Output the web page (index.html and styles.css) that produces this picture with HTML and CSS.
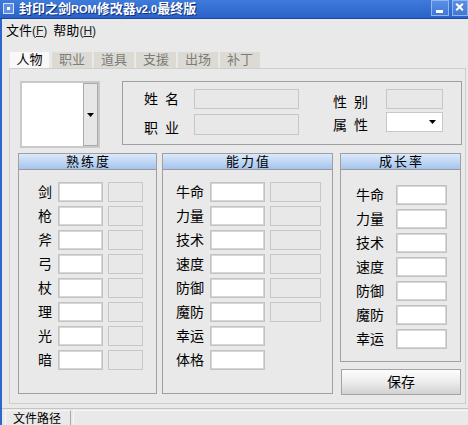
FILE: index.html
```html
<!DOCTYPE html>
<html>
<head>
<meta charset="utf-8">
<link rel="stylesheet" href="styles.css">
</head>
<body>
<div class="window">
  <div class="titlebar">
    <span class="app-icon"><span class="app-dot"></span></span>
    <span class="title">封印之剑<span class="lat">ROM</span>修改器<span class="lat">v2.0</span>最终版</span>
    <span class="spacer"></span>
    <span class="tbtn tmin"><svg width="16" height="14" viewBox="0 0 16 14"><rect x="4" y="9" width="7" height="3" fill="#fff"/></svg></span>
    <span class="tbtn tclose"><svg width="15" height="14" viewBox="0 0 15 14"><path d="M3.5 2.5l7 7M10.5 2.5l-7 7" stroke="#fff" stroke-width="2.2" fill="none"/></svg></span>
  </div>
  <div class="frame">
    <div class="menubar">
      <span class="menu">文件<span class="acc">(<u>F</u>)</span></span>
      <span class="menu">帮助<span class="acc">(<u>H</u>)</span></span>
    </div>
    <div class="client">
      <div class="tabs">
        <span class="tab active">人物</span>
        <span class="tab">职业</span>
        <span class="tab">道具</span>
        <span class="tab">支援</span>
        <span class="tab">出场</span>
        <span class="tab">补丁</span>
      </div>
      <div class="panel">
        <div class="toprow">
          <div class="listcombo">
            <div class="list"></div>
            <div class="dropbtn"><svg width="7" height="4" viewBox="0 0 7 4"><path d="M0 0h7L3.5 4z" fill="#000"/></svg></div>
          </div>
          <div class="infobox">
            <span class="lab la1">姓 名</span>
            <span class="inp dis"></span>
            <span></span>
            <span class="lab lb1">性 别</span>
            <span class="inp dis"></span>
            <span class="lab la2">职 业</span>
            <span class="inp dis"></span>
            <span></span>
            <span class="lab lb2">属 性</span>
            <span class="combo"><svg width="7" height="4" viewBox="0 0 7 4"><path d="M0 0h7L3.5 4z" fill="#000"/></svg></span>
          </div>
        </div>
        <div class="groups">
          <div class="group g1">
            <div class="ghead">熟练度</div>
            <div class="rows">
              <div class="row"><span class="rl">剑</span><span class="inp w1"></span><span class="inp dis w2"></span></div>
              <div class="row"><span class="rl">枪</span><span class="inp w1"></span><span class="inp dis w2"></span></div>
              <div class="row"><span class="rl">斧</span><span class="inp w1"></span><span class="inp dis w2"></span></div>
              <div class="row"><span class="rl">弓</span><span class="inp w1"></span><span class="inp dis w2"></span></div>
              <div class="row"><span class="rl">杖</span><span class="inp w1"></span><span class="inp dis w2"></span></div>
              <div class="row"><span class="rl">理</span><span class="inp w1"></span><span class="inp dis w2"></span></div>
              <div class="row"><span class="rl">光</span><span class="inp w1"></span><span class="inp dis w2"></span></div>
              <div class="row"><span class="rl">暗</span><span class="inp w1"></span><span class="inp dis w2"></span></div>
            </div>
          </div>
          <div class="group g2">
            <div class="ghead">能力值</div>
            <div class="rows">
              <div class="row"><span class="rl">牛命</span><span class="inp w1"></span><span class="inp dis w2"></span></div>
              <div class="row"><span class="rl">力量</span><span class="inp w1"></span><span class="inp dis w2"></span></div>
              <div class="row"><span class="rl">技术</span><span class="inp w1"></span><span class="inp dis w2"></span></div>
              <div class="row"><span class="rl">速度</span><span class="inp w1"></span><span class="inp dis w2"></span></div>
              <div class="row"><span class="rl">防御</span><span class="inp w1"></span><span class="inp dis w2"></span></div>
              <div class="row"><span class="rl">魔防</span><span class="inp w1"></span><span class="inp dis w2"></span></div>
              <div class="row"><span class="rl">幸运</span><span class="inp w1"></span></div>
              <div class="row"><span class="rl">体格</span><span class="inp w1"></span></div>
            </div>
          </div>
          <div class="rightcol">
            <div class="group g3">
              <div class="ghead">成长率</div>
              <div class="rows">
                <div class="row"><span class="rl">牛命</span><span class="inp w1"></span></div>
                <div class="row"><span class="rl">力量</span><span class="inp w1"></span></div>
                <div class="row"><span class="rl">技术</span><span class="inp w1"></span></div>
                <div class="row"><span class="rl">速度</span><span class="inp w1"></span></div>
                <div class="row"><span class="rl">防御</span><span class="inp w1"></span></div>
                <div class="row"><span class="rl">魔防</span><span class="inp w1"></span></div>
                <div class="row"><span class="rl">幸运</span><span class="inp w1"></span></div>
              </div>
            </div>
            <div class="save">保存</div>
          </div>
        </div>
      </div>
    </div>
    <div class="statusbar">
      <div class="spanel first">文件路径</div>
      <div class="spanel rest"></div>
    </div>
  </div>
</div>
</body>
</html>
```
FILE: styles.css
```css
* { box-sizing: border-box; }
html, body { margin: 0; padding: 0; }
body {
  width: 468px;
  height: 425px;
  overflow: hidden;
  background: #e9e9e9;
  font-family: "Liberation Sans", "Noto Sans CJK SC", sans-serif;
  font-size: 13px;
  color: #000;
}
.window {
  width: 468px;
  height: 425px;
  display: flex;
  flex-direction: column;
}
.titlebar {
  height: 19px;
  flex: none;
  display: flex;
  align-items: flex-start;
  background: linear-gradient(#3f7bdb, #2b62c7);
  border-bottom: 1px solid #1b469e;
}
.app-icon {
  width: 11px;
  height: 11px;
  margin: 3px 0 0 3px;
  border: 1px solid #d4e3fb;
  background: #5f90e0;
  display: flex;
  align-items: center;
  justify-content: center;
}
.app-dot { width: 3px; height: 3px; background: #fff; }
.title {
  margin-left: 5px;
  font-weight: bold;
  font-size: 13px;
  line-height: 18px;
  color: #fff;
  text-shadow: 1px 1px 0 #10307a;
  white-space: nowrap;
}
.lat { font-size: 11px; }
.spacer { flex: 1; }
.tbtn {
  height: 16px;
  border: 1px solid #94b6ee;
  background: linear-gradient(#5a8fe4, #4178d6);
  display: flex;
  align-items: center;
  justify-content: center;
}
.tmin { width: 18px; margin-right: 3px; }
.tclose { width: 16px; }
.frame {
  flex: 1;
  display: flex;
  flex-direction: column;
  border-left: 2px solid #2e66cc;
}
.menubar {
  height: 21px;
  flex: none;
  display: flex;
  align-items: center;
  gap: 6px;
  padding-left: 4px;
  font-size: 13px;
}
.acc { font-size: 12px; color: #222; }
.client {
  flex: none;
  padding: 12px 0 0 7px;
}
.tabs {
  display: flex;
  gap: 2px;
  height: 16px;
  margin-left: 1px;
}
.tab {
  width: 40px;
  height: 16px;
  line-height: 16px;
  text-align: center;
  font-size: 13px;
  background: #dcdad3;
  color: #7c7c7c;
}
.tab.active { background: #f8f8f8; color: #000; width: 39px; margin-right: 1px; }
.panel {
  width: 457px;
  height: 336px;
  border: 1px solid #cfcfcf;
  padding-top: 12px;
}
.toprow {
  display: flex;
  align-items: flex-start;
  margin-left: 10px;
  height: 67px;
}
.listcombo {
  width: 80px;
  height: 67px;
  border: 2px solid #c9c9c9;
  background: #fff;
  display: flex;
}
.list { flex: 1; }
.dropbtn {
  width: 15px;
  border: 1px solid #a9a9a9;
  background: #e7e7e7;
  display: flex;
  align-items: center;
  justify-content: center;
}
.infobox {
  margin-left: 22px;
  width: 340px;
  height: 64px;
  border: 1px solid #a0a0a0;
  display: grid;
  grid-template-columns: 50px 105px 34px 53px 57px;
  grid-template-rows: 20px 21px;
  row-gap: 5px;
  padding: 7px 0 0 21px;
}
.lab {
  font-size: 14px;
  line-height: 14px;
  word-spacing: 3px;
  white-space: nowrap;
}
.la1 { align-self: center; }
.la2 { align-self: end; }
.lb1 { align-self: end; }
.lb2 { align-self: center; }
.inp {
  display: block;
  height: 20px;
  background: #fff;
  border: 1px solid #c2c2c2;
  box-shadow: inset 0 0 0 1px #d6d6d6;
}
.inp.dis {
  background: #e8e8e8;
  border: 1px solid #c7c7c7;
  box-shadow: none;
}
.infobox .inp { height: auto; }
.combo {
  align-self: start;
  margin-top: -2px;
  height: 20px;
  background: #fff;
  border: 1px solid #c7c7c7;
  display: flex;
  align-items: center;
  justify-content: flex-end;
  padding-right: 6px;
}
.groups {
  display: flex;
  align-items: flex-start;
  margin: 5px 0 0 8px;
}
.group {
  border: 1px solid #a0a0a0;
}
.g1 { width: 139px; height: 241px; }
.g2 { width: 171px; height: 241px; margin-left: 5px; }
.rightcol { width: 121px; margin-left: 7px; display: flex; flex-direction: column; }
.g3 { width: 121px; height: 209px; }
.ghead {
  height: 16px;
  line-height: 15px;
  text-align: center;
  font-size: 13px;
  letter-spacing: 2px;
  padding-left: 2px;
  background: linear-gradient(#dce9fb, #a5c4ed);
  border-bottom: 1px solid #9a9a9a;
}
.rows {
  display: flex;
  flex-direction: column;
  gap: 4px;
  padding-top: 12px;
}
.row {
  display: flex;
  height: 20px;
  align-items: center;
}
.rl {
  font-size: 14px;
  line-height: 20px;
  white-space: nowrap;
}
.g1 .row { padding-left: 19px; }
.g1 .rl { width: 14px; margin-right: 6px; }
.g1 .w1 { width: 45px; margin-right: 5px; }
.g1 .w2 { width: 35px; }
.g2 .row { padding-left: 13px; }
.g2 .rl { width: 28px; margin-right: 6px; }
.g2 .w1 { width: 55px; margin-right: 5px; }
.g2 .w2 { width: 51px; }
.g3 .rows { padding-top: 15px; }
.g3 .row { padding-left: 15px; }
.g3 .rl { width: 28px; margin-right: 12px; }
.g3 .w1 { width: 51px; }
.save {
  margin: 7px 0 0 1px;
  width: 120px;
  height: 26px;
  border: 1px solid #a3a3a3;
  background: linear-gradient(#fdfdfd, #ececec 50%, #d2d2d2);
  text-align: center;
  line-height: 24px;
  font-size: 14px;
}
.statusbar {
  flex: 1;
  display: flex;
  margin-top: 4px;
  border-top: 1px solid #c4c4c4;
  padding: 1px 0 0 3px;
  gap: 2px;
}
.spanel {
  border-left: 1px solid #f6f6f6;
  border-top: 1px solid #f6f6f6;
  border-right: 1px solid #a9a9a9;
  font-size: 12px;
  line-height: 13px;
  padding-top: 2px;
}
.spanel.first { width: 66px; padding-left: 7px; }
.spanel.rest { flex: 1; border-right: none; }
```
